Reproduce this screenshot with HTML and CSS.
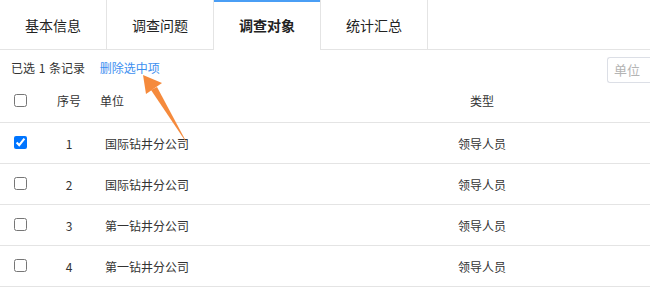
FILE: index.html
```html
<!DOCTYPE html>
<html lang="zh-CN">
<head>
    <meta charset="UTF-8">
    <meta name="viewport" content="width=device-width, initial-scale=1.0">
    <title>调查对象</title>
    <link rel="stylesheet" href="styles.css">
</head>
<body>
    <div class="page">
        <div class="tabs">
            <div class="tab">基本信息</div>
            <div class="tab">调查问题</div>
            <div class="tab active">调查对象</div>
            <div class="tab">统计汇总</div>
        </div>

        <div class="toolbar">
            <div class="selected-info">
                <span>已选 1 条记录</span>
                <a href="#" class="delete-link">删除选中项</a>
            </div>
            <input type="text" class="search" placeholder="单位">
        </div>

        <div class="table">
            <div class="row head">
                <div class="cell check"><input type="checkbox"></div>
                <div class="cell num">序号</div>
                <div class="cell unit">单位</div>
                <div class="cell type">类型</div>
                <div class="cell"></div>
            </div>
            <div class="row">
                <div class="cell check"><input type="checkbox" checked></div>
                <div class="cell num">1</div>
                <div class="cell unit">国际钻井分公司</div>
                <div class="cell type">领导人员</div>
                <div class="cell"></div>
            </div>
            <div class="row">
                <div class="cell check"><input type="checkbox"></div>
                <div class="cell num">2</div>
                <div class="cell unit">国际钻井分公司</div>
                <div class="cell type">领导人员</div>
                <div class="cell"></div>
            </div>
            <div class="row">
                <div class="cell check"><input type="checkbox"></div>
                <div class="cell num">3</div>
                <div class="cell unit">第一钻井分公司</div>
                <div class="cell type">领导人员</div>
                <div class="cell"></div>
            </div>
            <div class="row">
                <div class="cell check"><input type="checkbox"></div>
                <div class="cell num">4</div>
                <div class="cell unit">第一钻井分公司</div>
                <div class="cell type">领导人员</div>
                <div class="cell"></div>
            </div>
        </div>

        <!-- annotation arrow pointing at the delete link -->
        <svg class="arrow" width="650" height="298" viewBox="0 0 650 298">
            <polygon points="143,75 162,83 146,94" fill="#f58a3c"/>
            <polygon points="151,90 157,87 188,145" fill="#f58a3c"/>
        </svg>
    </div>
</body>
</html>
```

FILE: styles.css
```css
body {
    margin: 0;
    padding: 0;
    overflow: hidden;
    background: #fff;
    font-family: "Noto Sans CJK SC", "Noto Sans", sans-serif;
    color: #333;
}

.page {
    position: relative;
    width: 650px;
}

/* tabs */
.tabs {
    display: flex;
    height: 49px;
    border-bottom: 1px solid #e4e4e4;
}

.tab {
    width: 106px;
    height: 49px;
    border-right: 1px solid #e4e4e4;
    display: flex;
    align-items: center;
    justify-content: center;
    font-size: 14px;
    color: #222;
}

.tab.active {
    height: 50px;
    margin-bottom: -1px;
    background: #fff;
    font-weight: bold;
    box-shadow: inset 0 2px 0 #4a9ef5;
}

/* toolbar */
.toolbar {
    height: 34px;
    display: flex;
    align-items: center;
    justify-content: space-between;
    padding-left: 11px;
}

.selected-info {
    font-size: 12px;
    color: #333;
    word-spacing: 1px;
}

.delete-link {
    color: #3d8ff0;
    text-decoration: none;
    margin-left: 11px;
    word-spacing: 0;
}

/* search box is cut off by the right edge of the frame */
.search {
    width: 43px;
    height: 26px;
    box-sizing: border-box;
    margin-top: 5px;
    border: 1px solid #dcdfe6;
    border-right: none;
    border-radius: 3px 0 0 3px;
    padding: 0 0 0 6px;
    font-size: 13px;
    font-family: "Noto Sans CJK SC", sans-serif;
}

.search::placeholder {
    color: #b4b4b4;
}

/* table */
.row {
    display: grid;
    grid-template-columns: 42px 54px 284px 204px 66px;
    height: 40px;
    border-bottom: 1px solid #e4e4e4;
    font-size: 12px;
}

.row.head {
    height: 38px;
}

.cell {
    display: flex;
    align-items: center;
}

.head .cell {
    padding-bottom: 5px;
}

.check {
    padding-left: 14px;
}

.check input {
    margin: 0;
    width: 13px;
    height: 13px;
}

.row:not(.head) .check input {
    margin-top: -2px;
}

.num {
    justify-content: center;
}

.unit {
    padding-left: 9px;
}

.head .unit {
    padding-left: 4px;
}

.type {
    justify-content: center;
}

.arrow {
    position: absolute;
    left: 0;
    top: 0;
    pointer-events: none;
}
```
